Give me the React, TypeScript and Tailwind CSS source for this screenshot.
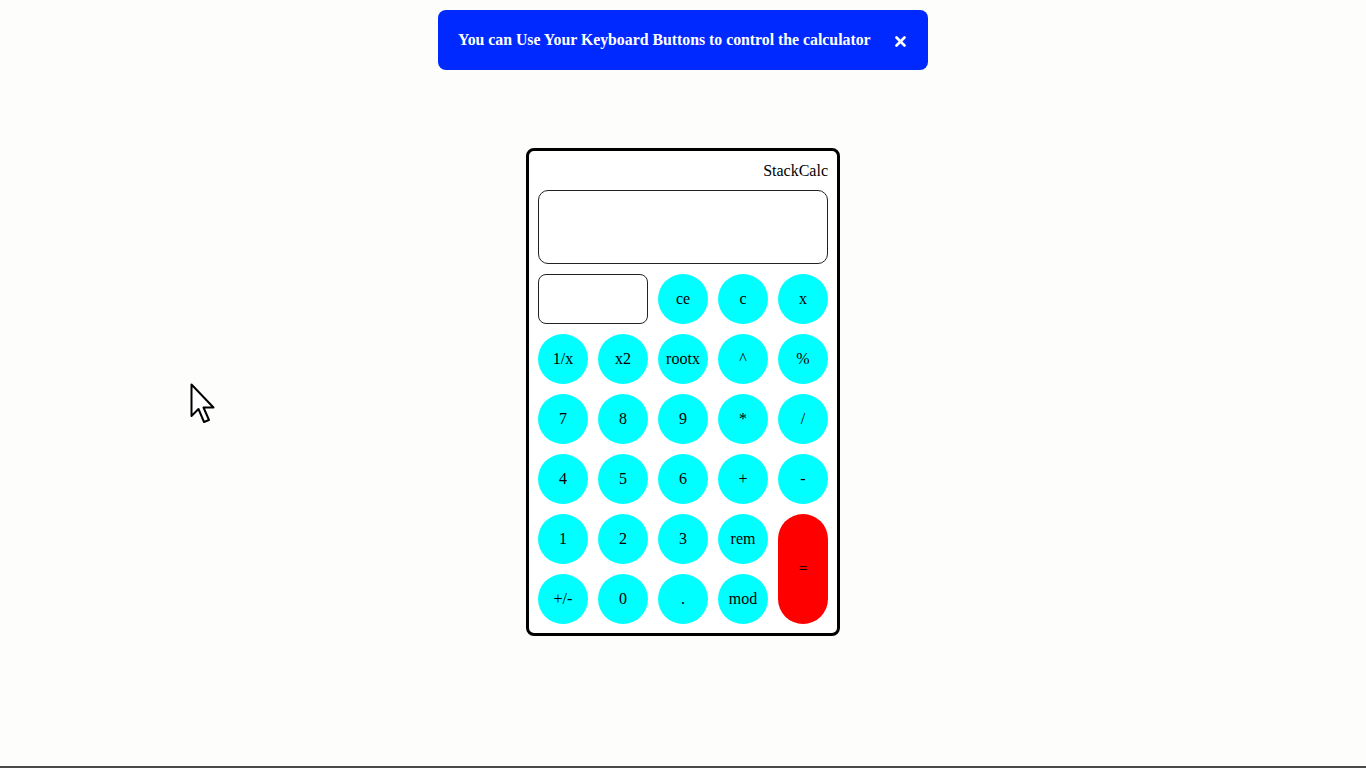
import React from "react";

const keys: { label: string; red?: boolean }[] = [
  { label: "1/x" }, { label: "x2" }, { label: "rootx" }, { label: "^" }, { label: "%" },
  { label: "7" }, { label: "8" }, { label: "9" }, { label: "*" }, { label: "/" },
  { label: "4" }, { label: "5" }, { label: "6" }, { label: "+" }, { label: "-" },
];

function Btn({ label }: { label: string }) {
  return (
    <button className="w-[50px] h-[50px] rounded-full bg-[#00ffff] text-black text-[16px] flex items-center justify-center">
      {label}
    </button>
  );
}

export default function App() {
  return (
    <div
      className="relative w-[1366px] h-[768px] bg-[#fdfdfb] overflow-hidden flex flex-col items-center"
      style={{ fontFamily: '"Liberation Serif", "DejaVu Serif", serif' }}
    >
      <div className="mt-[10px] w-[490px] h-[60px] rounded-[8px] bg-[#0029ff] flex items-center pl-[20px] pr-[22px] text-white">
        <span className="text-[15.8px] font-semibold">You can Use Your Keyboard Buttons to control the calculator</span>
        <svg className="ml-auto mt-[2px]" width="11" height="11" viewBox="0 0 11 11">
          <path d="M1.5 1.5 L9.5 9.5 M9.5 1.5 L1.5 9.5" stroke="white" strokeWidth="2.6" strokeLinecap="round" />
        </svg>
      </div>

      <div className="mt-[78px] w-[314px] border-[3px] border-black rounded-[8px] bg-white px-[9px] pt-[9px] pb-[9px]">
        <div className="text-right text-[16px] leading-[22px] h-[22px] mb-[8px]">StackCalc</div>
        <div className="h-[74px] border border-[#222] rounded-[10px]"></div>
        <div className="mt-[10px] grid grid-cols-[repeat(5,50px)] gap-[10px]">
          <div className="col-span-2 h-[50px] border border-[#222] rounded-[8px]"></div>
          <Btn label="ce" />
          <Btn label="c" />
          <Btn label="x" />
          {keys.map((k) => (
            <Btn key={k.label} label={k.label} />
          ))}
          <Btn label="1" />
          <Btn label="2" />
          <Btn label="3" />
          <Btn label="rem" />
          <button className="row-span-2 w-[50px] h-[110px] rounded-full bg-[#ff0000] text-black text-[16px] flex items-center justify-center">
            =
          </button>
          <Btn label="+/-" />
          <Btn label="0" />
          <Btn label="." />
          <Btn label="mod" />
        </div>
      </div>

      <svg className="absolute left-[190px] top-[383px]" width="28" height="42" viewBox="0 0 28 42">
        <path d="M1.5 1.5 L1.5 33 L8.5 26 L14 39 L19 37 L13.5 24.5 L23.5 24.5 Z" fill="white" stroke="black" strokeWidth="2" strokeLinejoin="round" />
      </svg>

      <div className="absolute bottom-0 left-0 w-full h-[2px] bg-[#4a4a4a]"></div>
    </div>
  );
}
